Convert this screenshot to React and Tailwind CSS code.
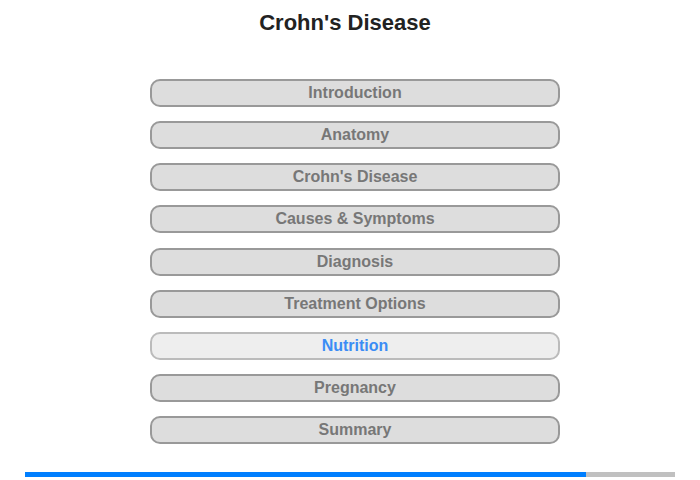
export default function App() {
  const items = [
    "Introduction",
    "Anatomy",
    "Crohn's Disease",
    "Causes & Symptoms",
    "Diagnosis",
    "Treatment Options",
    "Nutrition",
    "Pregnancy",
    "Summary",
  ];
  return (
    <div className="w-[700px] h-[480px] bg-white font-['Liberation_Sans',Arial,sans-serif] flex flex-col">
      <div className="pt-[10px] pr-[10px] h-[79px] text-center text-[22px] leading-[26px] font-bold text-[#222]">
        Crohn's Disease
      </div>
      <div className="flex flex-col items-center pl-[10px] gap-[14.125px]">
        {items.map((t) =>
          t === "Nutrition" ? (
            <div
              key={t}
              className="w-[410px] h-[28px] rounded-[10px] border-2 border-[#bbb] bg-[#eee] flex items-center justify-center text-[16px] font-bold text-[#3b8cf5]"
            >
              {t}
            </div>
          ) : (
            <div
              key={t}
              className="w-[410px] h-[28px] rounded-[10px] border-2 border-[#999] bg-[#ddd] flex items-center justify-center text-[16px] font-bold text-[#777]"
            >
              {t}
            </div>
          )
        )}
      </div>
      <div className="mt-[28px] mx-[25px] h-[5px] bg-[#c0c0c0] flex">
        <div className="w-[561px] h-full bg-[#007fff]" />
      </div>
    </div>
  );
}
